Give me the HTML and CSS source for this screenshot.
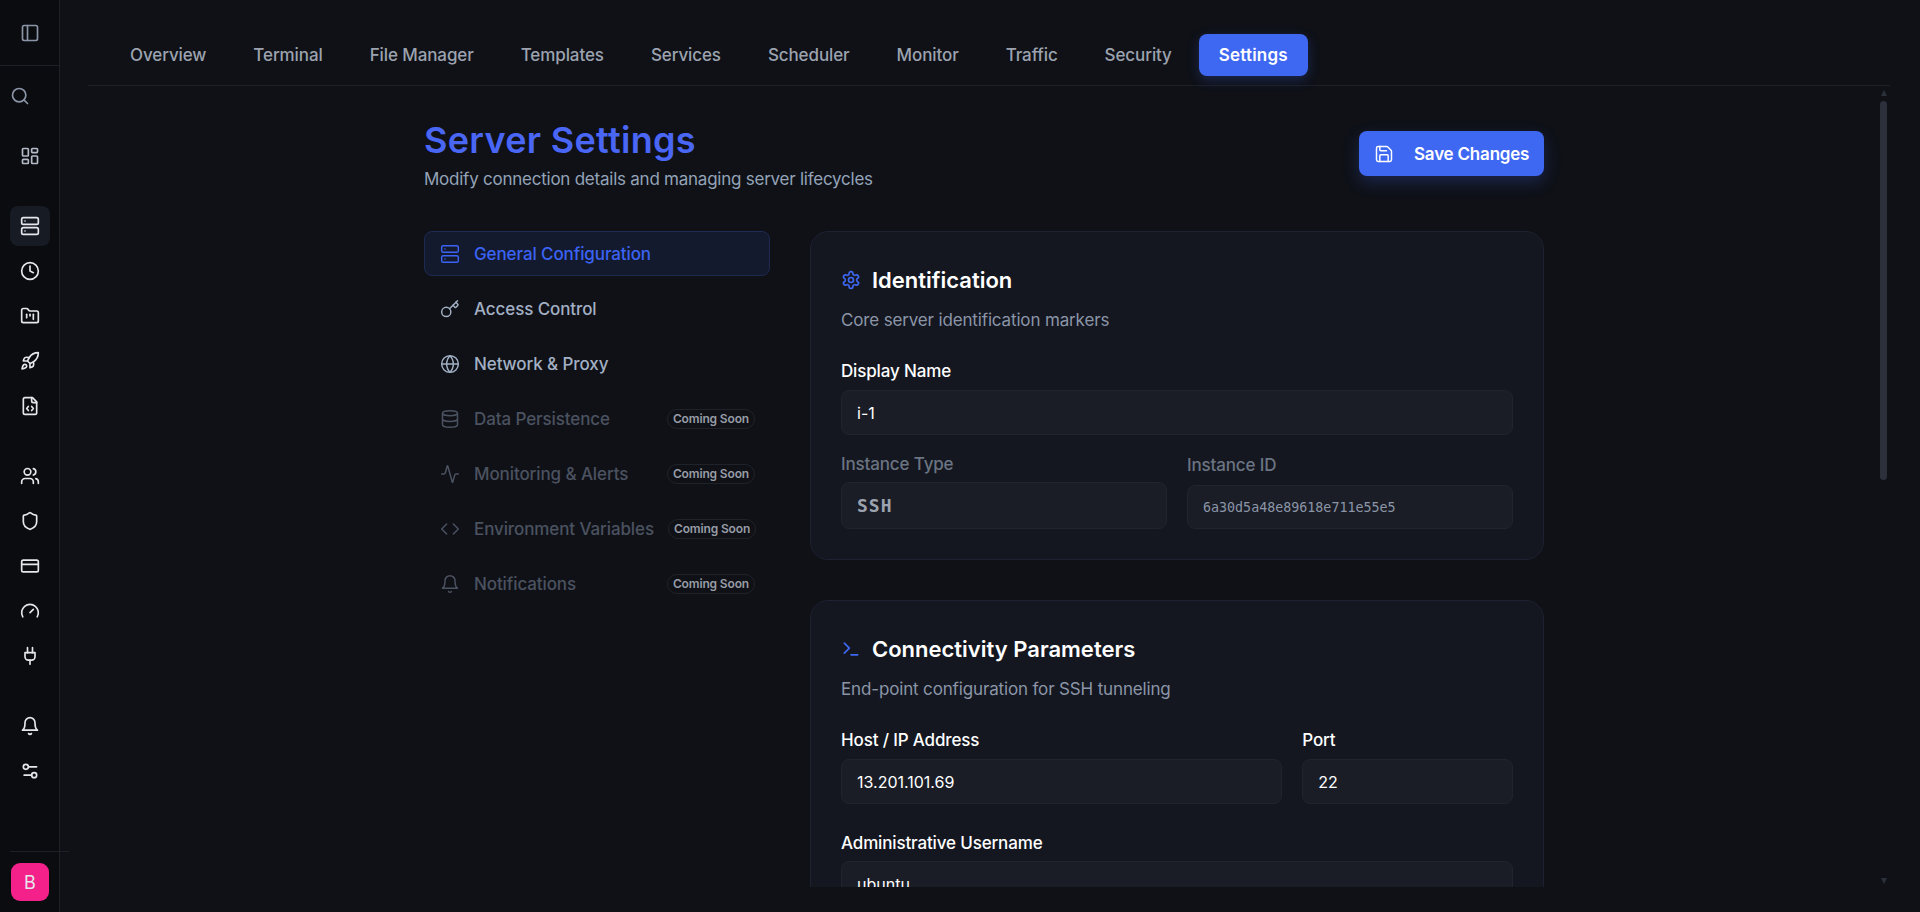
FILE: index.html
```html
<!DOCTYPE html>
<html>
<head>
  <title>Server Settings</title>
  <link rel="stylesheet" href="styles.css">
</head>
<body>

  <!-- Icon sprite -->
  <svg class="sprite" xmlns="http://www.w3.org/2000/svg">
    <symbol id="i-panel" viewBox="0 0 24 24"><rect x="3" y="3" width="18" height="18" rx="2"/><path d="M9 3v18"/></symbol>
    <symbol id="i-search" viewBox="0 0 24 24"><circle cx="11" cy="11" r="8"/><path d="m21 21-4.3-4.3"/></symbol>
    <symbol id="i-dashboard" viewBox="0 0 24 24"><rect x="3" y="3" width="7" height="9" rx="1"/><rect x="14" y="3" width="7" height="5" rx="1"/><rect x="14" y="12" width="7" height="9" rx="1"/><rect x="3" y="16" width="7" height="5" rx="1"/></symbol>
    <symbol id="i-server" viewBox="0 0 24 24"><rect x="2" y="2" width="20" height="8" rx="2"/><rect x="2" y="14" width="20" height="8" rx="2"/><path d="M6 6h.01"/><path d="M6 18h.01"/></symbol>
    <symbol id="i-clock" viewBox="0 0 24 24"><circle cx="12" cy="12" r="10"/><path d="M12 6v6l4 2"/></symbol>
    <symbol id="i-folder" viewBox="0 0 24 24"><path d="M4 20h16a2 2 0 0 0 2-2V8a2 2 0 0 0-2-2h-7.93a2 2 0 0 1-1.66-.9l-.82-1.2A2 2 0 0 0 7.93 3H4a2 2 0 0 0-2 2v13c0 1.1.9 2 2 2Z"/><path d="M8 10v4"/><path d="M12 10v2"/><path d="M16 10v6"/></symbol>
    <symbol id="i-rocket" viewBox="0 0 24 24"><path d="M4.5 16.5c-1.5 1.26-2 5-2 5s3.74-.5 5-2c.71-.84.7-2.13-.09-2.91a2.18 2.18 0 0 0-2.91-.09z"/><path d="m12 15-3-3a22 22 0 0 1 2-3.95A12.88 12.88 0 0 1 22 2c0 2.72-.78 7.5-6 11a22.35 22.35 0 0 1-4 2z"/><path d="M9 12H4s.55-3.03 2-4c1.62-1.08 5 0 5 0"/><path d="M12 15v5s3.03-.55 4-2c1.08-1.62 0-5 0-5"/></symbol>
    <symbol id="i-file" viewBox="0 0 24 24"><path d="M15 2H6a2 2 0 0 0-2 2v16a2 2 0 0 0 2 2h12a2 2 0 0 0 2-2V7Z"/><path d="M14 2v4a2 2 0 0 0 2 2h4"/><path d="m10 12.5-2 2.5 2 2.5"/><path d="m14 12.5 2 2.5-2 2.5"/></symbol>
    <symbol id="i-users" viewBox="0 0 24 24"><path d="M16 21v-2a4 4 0 0 0-4-4H6a4 4 0 0 0-4 4v2"/><circle cx="9" cy="7" r="4"/><path d="M22 21v-2a4 4 0 0 0-3-3.87"/><path d="M16 3.13a4 4 0 0 1 0 7.75"/></symbol>
    <symbol id="i-shield" viewBox="0 0 24 24"><path d="M20 13c0 5-3.5 7.5-7.66 8.95a1 1 0 0 1-.67-.01C7.5 20.5 4 18 4 13V6a1 1 0 0 1 1-1c2 0 4.5-1.2 6.24-2.72a1.17 1.17 0 0 1 1.52 0C14.51 3.81 17 5 19 5a1 1 0 0 1 1 1z"/></symbol>
    <symbol id="i-card" viewBox="0 0 24 24"><rect x="2" y="5" width="20" height="14" rx="2"/><path d="M2 10h20"/></symbol>
    <symbol id="i-gauge" viewBox="0 0 24 24"><path d="m12 14 4-4"/><path d="M3.34 19a10 10 0 1 1 17.32 0"/></symbol>
    <symbol id="i-plug" viewBox="0 0 24 24"><path d="M12 22v-5"/><path d="M9 8V2"/><path d="M15 8V2"/><path d="M18 8v5a4 4 0 0 1-4 4h-4a4 4 0 0 1-4-4V8Z"/></symbol>
    <symbol id="i-bell" viewBox="0 0 24 24"><path d="M6 8a6 6 0 0 1 12 0c0 7 3 9 3 9H3s3-2 3-9"/><path d="M10.3 21a1.94 1.94 0 0 0 3.4 0"/></symbol>
    <symbol id="i-sliders" viewBox="0 0 24 24"><path d="M20 7h-9"/><path d="M14 17H5"/><circle cx="17" cy="17" r="3"/><circle cx="7" cy="7" r="3"/></symbol>
    <symbol id="i-key" viewBox="0 0 24 24"><path d="m15.5 7.5 2.3 2.3a1 1 0 0 0 1.4 0l2.1-2.1a1 1 0 0 0 0-1.4L19 4"/><path d="m21 2-9.6 9.6"/><circle cx="7.5" cy="15.5" r="5.5"/></symbol>
    <symbol id="i-globe" viewBox="0 0 24 24"><circle cx="12" cy="12" r="10"/><path d="M12 2a14.5 14.5 0 0 0 0 20 14.5 14.5 0 0 0 0-20"/><path d="M2 12h20"/></symbol>
    <symbol id="i-database" viewBox="0 0 24 24"><ellipse cx="12" cy="5" rx="9" ry="3"/><path d="M3 5v14a9 3 0 0 0 18 0V5"/><path d="M3 12a9 3 0 0 0 18 0"/></symbol>
    <symbol id="i-activity" viewBox="0 0 24 24"><path d="M22 12h-2.48a2 2 0 0 0-1.93 1.46l-2.35 8.36a.25.25 0 0 1-.48 0L9.24 2.18a.25.25 0 0 0-.48 0l-2.35 8.36A2 2 0 0 1 4.49 12H2"/></symbol>
    <symbol id="i-code" viewBox="0 0 24 24"><path d="m16 18 6-6-6-6"/><path d="m8 6-6 6 6 6"/></symbol>
    <symbol id="i-gear" viewBox="0 0 24 24"><path d="M12.22 2h-.44a2 2 0 0 0-2 2v.18a2 2 0 0 1-1 1.73l-.43.25a2 2 0 0 1-2 0l-.15-.08a2 2 0 0 0-2.73.73l-.22.38a2 2 0 0 0 .73 2.73l.15.1a2 2 0 0 1 1 1.72v.51a2 2 0 0 1-1 1.74l-.15.09a2 2 0 0 0-.73 2.73l.22.38a2 2 0 0 0 2.73.73l.15-.08a2 2 0 0 1 2 0l.43.25a2 2 0 0 1 1 1.73V20a2 2 0 0 0 2 2h.44a2 2 0 0 0 2-2v-.18a2 2 0 0 1 1-1.73l.43-.25a2 2 0 0 1 2 0l.15.08a2 2 0 0 0 2.73-.73l.22-.39a2 2 0 0 0-.73-2.73l-.15-.08a2 2 0 0 1-1-1.74v-.5a2 2 0 0 1 1-1.74l.15-.09a2 2 0 0 0 .73-2.73l-.22-.38a2 2 0 0 0-2.73-.73l-.15.08a2 2 0 0 1-2 0l-.43-.25a2 2 0 0 1-1-1.73V4a2 2 0 0 0-2-2z"/><circle cx="12" cy="12" r="3"/></symbol>
    <symbol id="i-terminal" viewBox="0 0 24 24"><path d="m4 17 6-6-6-6"/><path d="M12 19h8"/></symbol>
    <symbol id="i-save" viewBox="0 0 24 24"><path d="M15.2 3a2 2 0 0 1 1.4.6l3.8 3.8a2 2 0 0 1 .6 1.4V19a2 2 0 0 1-2 2H5a2 2 0 0 1-2-2V5a2 2 0 0 1 2-2z"/><path d="M17 21v-7a1 1 0 0 0-1-1H8a1 1 0 0 0-1 1v7"/><path d="M7 3v4a1 1 0 0 0 1 1h7"/></symbol>
  </svg>

  <div class="app">

    <!-- Left rail -->
    <aside class="rail">
      <div class="rail-head">
        <svg class="icon icon-muted"><use href="#i-panel"/></svg>
      </div>
      <div class="rail-nav">
        <div class="rail-group rail-search">
          <a class="rail-item rail-item-left"><svg class="icon icon-muted"><use href="#i-search"/></svg></a>
          <a class="rail-item"><svg class="icon icon-soft"><use href="#i-dashboard"/></svg></a>
        </div>
        <div class="rail-group">
          <a class="rail-item active"><svg class="icon"><use href="#i-server"/></svg></a>
          <a class="rail-item"><svg class="icon"><use href="#i-clock"/></svg></a>
          <a class="rail-item"><svg class="icon"><use href="#i-folder"/></svg></a>
          <a class="rail-item"><svg class="icon"><use href="#i-rocket"/></svg></a>
          <a class="rail-item"><svg class="icon"><use href="#i-file"/></svg></a>
        </div>
        <div class="rail-group">
          <a class="rail-item"><svg class="icon"><use href="#i-users"/></svg></a>
          <a class="rail-item"><svg class="icon"><use href="#i-shield"/></svg></a>
          <a class="rail-item"><svg class="icon"><use href="#i-card"/></svg></a>
          <a class="rail-item"><svg class="icon"><use href="#i-gauge"/></svg></a>
          <a class="rail-item"><svg class="icon"><use href="#i-plug"/></svg></a>
        </div>
        <div class="rail-group">
          <a class="rail-item"><svg class="icon"><use href="#i-bell"/></svg></a>
          <a class="rail-item"><svg class="icon"><use href="#i-sliders"/></svg></a>
        </div>
      </div>
      <div class="rail-foot">
        <div class="avatar">B</div>
      </div>
    </aside>

    <main class="main">
      <nav class="tabs">
        <a class="tab">Overview</a>
        <a class="tab">Terminal</a>
        <a class="tab">File Manager</a>
        <a class="tab">Templates</a>
        <a class="tab">Services</a>
        <a class="tab">Scheduler</a>
        <a class="tab">Monitor</a>
        <a class="tab">Traffic</a>
        <a class="tab">Security</a>
        <a class="tab tab-active">Settings</a>
      </nav>

      <div class="scroller">
        <div class="page">

          <header class="page-head">
            <div>
              <h1>Server Settings</h1>
              <p class="page-sub">Modify connection details and managing server lifecycles</p>
            </div>
            <button class="save-btn"><svg class="icon"><use href="#i-save"/></svg>Save Changes</button>
          </header>

          <div class="layout">

            <!-- Section menu -->
            <ul class="menu">
              <li class="menu-item current"><svg class="icon"><use href="#i-server"/></svg><span>General Configuration</span></li>
              <li class="menu-item"><svg class="icon"><use href="#i-key"/></svg><span>Access Control</span></li>
              <li class="menu-item"><svg class="icon"><use href="#i-globe"/></svg><span>Network &amp; Proxy</span></li>
              <li class="menu-item off"><svg class="icon"><use href="#i-database"/></svg><span>Data Persistence</span><em class="soon">Coming Soon</em></li>
              <li class="menu-item off"><svg class="icon"><use href="#i-activity"/></svg><span>Monitoring &amp; Alerts</span><em class="soon">Coming Soon</em></li>
              <li class="menu-item off"><svg class="icon"><use href="#i-code"/></svg><span>Environment Variables</span><em class="soon">Coming Soon</em></li>
              <li class="menu-item off"><svg class="icon"><use href="#i-bell"/></svg><span>Notifications</span><em class="soon">Coming Soon</em></li>
            </ul>

            <div class="cards">

              <section class="card">
                <h2><svg class="icon icon-head"><use href="#i-gear"/></svg>Identification</h2>
                <p class="card-sub">Core server identification markers</p>

                <div class="field">
                  <label>Display Name</label>
                  <div class="input">i-1</div>
                </div>

                <div class="row row-half">
                  <div class="field">
                    <label class="dim">Instance Type</label>
                    <div class="input input-type">SSH</div>
                  </div>
                  <div class="field field-id">
                    <label class="dim">Instance ID</label>
                    <div class="input input-id">6a30d5a48e89618e711e55e5</div>
                  </div>
                </div>
              </section>

              <section class="card">
                <h2><svg class="icon icon-head"><use href="#i-terminal"/></svg>Connectivity Parameters</h2>
                <p class="card-sub">End-point configuration for SSH tunneling</p>

                <div class="row row-host">
                  <div class="field field-host">
                    <label>Host / IP Address</label>
                    <div class="input">13.201.101.69</div>
                  </div>
                  <div class="field">
                    <label>Port</label>
                    <div class="input">22</div>
                  </div>
                </div>

                <div class="field field-user">
                  <label>Administrative Username</label>
                  <div class="input">ubuntu</div>
                </div>
              </section>

            </div>
          </div>
        </div>
      </div>

      <!-- Scrollbar -->
      <div class="bar-up"></div>
      <div class="bar-thumb"></div>
      <div class="bar-down"></div>
    </main>
  </div>

</body>
</html>
```

FILE: styles.css
```css
* { box-sizing: border-box; }

html, body {
  height: 100%;
  margin: 0;
}

body {
  background: #0f1117;
  color: #fff;
  font-family: Inter, "Noto Sans", sans-serif;
  overflow: hidden;
}

.sprite { display: none; }

.icon {
  width: 20px;
  height: 20px;
  flex: none;
  fill: none;
  stroke: currentColor;
  stroke-width: 1.75;
  stroke-linecap: round;
  stroke-linejoin: round;
}

.icon-muted { color: #8b95a7; }
.icon-soft { color: #b4bbc7; }
.icon-head { color: #3f68f2; stroke-width: 2; }

.app {
  display: flex;
  height: 100%;
}

/* Left rail */
.rail {
  width: 60px;
  flex: none;
  display: flex;
  flex-direction: column;
  background: #0a0c10;
  border-right: 1px solid #1e2027;
  color: #e5e7eb;
}

.rail .icon { stroke-width: 2; }

.rail-head {
  height: 66px;
  flex: none;
  display: flex;
  align-items: center;
  justify-content: center;
  border-bottom: 1px solid #1e2027;
}

.rail-nav {
  padding: 10px 9px 0 10px;
  display: flex;
  flex-direction: column;
  gap: 30px;
}

.rail-group {
  display: flex;
  flex-direction: column;
  gap: 5px;
}

.rail-search { gap: 20px; }

.rail-item {
  width: 40px;
  height: 40px;
  display: flex;
  align-items: center;
  justify-content: center;
  border-radius: 8px;
}

.rail-item-left { margin-left: -10px; }
.rail-item.active { background: #171b24; }

.rail-foot {
  margin: auto -10px 0 10px;
  padding: 11px 0;
  border-top: 1px solid #1e2027;
}

.avatar {
  width: 38px;
  height: 38px;
  margin-left: 1px;
  display: flex;
  align-items: center;
  justify-content: center;
  background: #f5218b;
  border-radius: 9px;
  font-size: 18px;
}

/* Main column */
.main {
  position: relative;
  flex: 1;
  min-width: 0;
  display: flex;
  flex-direction: column;
  padding: 0 30px 25px 28px;
}

.tabs {
  height: 86px;
  flex: none;
  display: flex;
  gap: 7px;
  padding: 34px 0 0 22px;
  border-bottom: 1px solid #1c1f26;
}

.tab {
  height: 42px;
  padding: 0 20px;
  display: flex;
  align-items: center;
  border-radius: 8px;
  font-size: 17px;
  letter-spacing: -0.1px;
  font-weight: 500;
  color: #9ca3af;
}

.tab-active {
  background: #3f68f2;
  color: #fff;
  font-weight: 600;
  letter-spacing: 0.2px;
  box-shadow: 0 4px 12px rgba(63, 104, 242, 0.25);
}

.scroller {
  flex: 1;
  min-height: 0;
  overflow: hidden;
  padding-right: 10px;
}

.page {
  width: 1120px;
  margin: 0 auto;
  padding-top: 30px;
}

.page-head {
  display: flex;
  align-items: center;
  justify-content: space-between;
  margin-bottom: 40px;
}

h1 {
  margin: 0;
  font-size: 36px;
  line-height: 48px;
  font-weight: 600;
  letter-spacing: 0.3px;
  color: #4a66f5;
}

.page-sub {
  margin: 3px 0 0;
  font-size: 17px;
  letter-spacing: -0.24px;
  line-height: 24px;
  color: #94a3b8;
}

.save-btn {
  height: 45px;
  width: 185px;
  display: flex;
  align-items: center;
  gap: 20px;
  padding: 0 15px;
  border: none;
  border-radius: 8px;
  background: #3f68f2;
  color: #fff;
  font-family: inherit;
  font-size: 17px;
  letter-spacing: -0.2px;
  font-weight: 600;
  white-space: nowrap;
  box-shadow: 0 6px 16px rgba(63, 104, 242, 0.25);
}

.layout {
  display: grid;
  grid-template-columns: 346px 1fr;
  gap: 40px;
  align-items: start;
}

/* Section menu */
.menu {
  list-style: none;
  margin: 0;
  padding: 0;
  display: flex;
  flex-direction: column;
  gap: 10px;
}

.menu-item {
  height: 45px;
  display: flex;
  align-items: center;
  gap: 14px;
  padding: 0 14px 0 15px;
  border: 1px solid transparent;
  border-radius: 8px;
  font-size: 17px;
  letter-spacing: -0.1px;
  font-weight: 500;
  white-space: nowrap;
  color: #a3b0c4;
}

.menu-item.current {
  background: #141a2e;
  border-color: #1e2a52;
  color: #3b63f5;
}

.menu-item.off { color: #4b5260; }

.soon {
  margin-left: auto;
  flex: none;
  height: 20px;
  padding: 0 5px;
  display: flex;
  align-items: center;
  border: 1px solid #1f2229;
  border-radius: 10px;
  font-style: normal;
  font-size: 12px;
  letter-spacing: -0.15px;
  font-weight: 600;
  color: #979ca6;
}

/* Cards */
.cards {
  display: flex;
  flex-direction: column;
  gap: 40px;
}

.card {
  padding: 32px 30px 30px;
  background: #141720;
  border: 1px solid #1d2130;
  border-radius: 18px;
}

h2 {
  margin: 0;
  display: flex;
  align-items: center;
  gap: 11px;
  font-size: 22px;
  line-height: 32px;
  font-weight: 600;
}

.card-sub {
  margin: 12px 0 29px;
  font-size: 17px;
  letter-spacing: -0.15px;
  line-height: 24px;
  color: #8b95a7;
}

label {
  display: block;
  height: 20px;
  margin-bottom: 9px;
  font-size: 17px;
  letter-spacing: -0.15px;
  line-height: 20px;
  font-weight: 500;
}

label.dim { color: #6b7482; margin-bottom: 8px; }

.input {
  height: 45px;
  padding: 0 15px;
  display: flex;
  align-items: center;
  background: #1a1d26;
  border: 1px solid #20242e;
  border-radius: 8px;
  font-size: 16px;
}

.input-type {
  height: 47px;
  font-family: "DejaVu Sans Mono", monospace;
  font-size: 18px;
  letter-spacing: 1px;
  font-weight: 700;
  color: #9ca3af;
}

.input-id {
  height: 44px;
  font-family: "DejaVu Sans Mono", monospace;
  font-size: 13.33px;
  color: #8b95a7;
}

.field-id label { margin-bottom: 10px; }

.row {
  display: grid;
  gap: 20px;
  align-items: end;
}

.row-half {
  grid-template-columns: 1fr 1fr;
  margin-top: 19px;
}

.row-host { grid-template-columns: repeat(3, 1fr); }
.field-host { grid-column: span 2; }
.field-user { margin-top: 29px; }
.field-user label { margin-bottom: 8px; }

/* Scrollbar */
.bar-up, .bar-down {
  position: absolute;
  right: 33px;
  width: 0;
  height: 0;
  border-left: 3.5px solid transparent;
  border-right: 3.5px solid transparent;
}

.bar-up {
  top: 90px;
  border-bottom: 6px solid #2c303b;
}

.bar-down {
  top: 878px;
  border-top: 6px solid #2c303b;
}

.bar-thumb {
  position: absolute;
  top: 101px;
  right: 33px;
  width: 7px;
  height: 379px;
  background: #2c303b;
  border-radius: 4px;
}
```
